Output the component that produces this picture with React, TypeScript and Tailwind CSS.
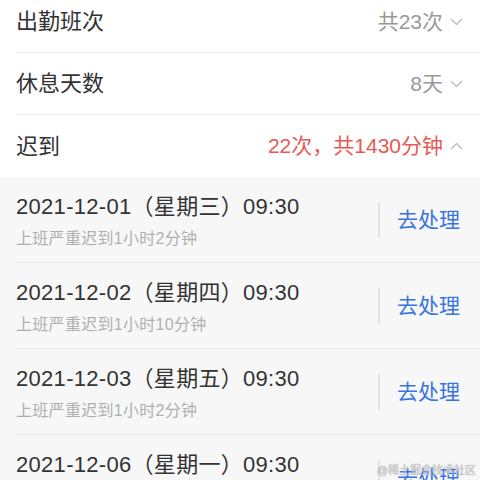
import React from 'react'

const font = { fontFamily: '"Liberation Sans", "Noto Sans CJK SC", sans-serif' }

function Chevron({ up }: { up?: boolean }) {
  return (
    <svg width="13" height="8" viewBox="0 0 13 8" className="ml-[7px]">
      <polyline
        points={up ? '1,7 6.5,1.5 12,7' : '1,1 6.5,6.5 12,1'}
        fill="none"
        stroke="#b5b5b5"
        strokeWidth="1.2"
      />
    </svg>
  )
}

export default function App() {
  const summary = [
    { label: '出勤班次', value: '共23次', red: false, up: false },
    { label: '休息天数', value: '8天', red: false, up: false },
    { label: '迟到', value: '22次，共1430分钟', red: true, up: true },
  ]

  const lates = [
    { date: '2021-12-01（星期三）09:30', desc: '上班严重迟到1小时2分钟' },
    { date: '2021-12-02（星期四）09:30', desc: '上班严重迟到1小时10分钟' },
    { date: '2021-12-03（星期五）09:30', desc: '上班严重迟到1小时2分钟' },
    { date: '2021-12-06（星期一）09:30', desc: '上班严重迟到1小时2分钟' },
  ]

  return (
    <div className="relative w-[480px] h-[480px] overflow-hidden bg-white" style={font}>
      {/* summary rows */}
      <div className="-mt-[9px]">
        {summary.map((row, i) => (
          <div key={row.label} className="pl-4">
            <div
              className={`flex items-center h-[62px] pr-[17px] ${
                i < summary.length - 1 ? 'border-b border-[#ececec]' : ''
              }`}
            >
              <span className="text-[22px] text-[#333]">{row.label}</span>
              <span className={`ml-auto text-[21px] ${row.red ? 'text-[#e65a55]' : 'text-[#999]'}`}>
                {row.value}
              </span>
              <Chevron up={row.up} />
            </div>
          </div>
        ))}
      </div>

      {/* late list */}
      <div className="bg-[#f7f7f7]">
        {lates.map((item) => (
          <div key={item.date} className="pl-4">
            <div className="flex items-center border-b border-[#e9e9e9]">
              <div className="flex flex-col pt-[15px] pb-[12px]">
                <span className="text-[22px] leading-[30px] tracking-[0.3px] text-[#333]">{item.date}</span>
                <span className="mt-[6px] text-[16px] leading-[22px] tracking-[0.3px] text-[#b0b0b0]">{item.desc}</span>
              </div>
              <div className="ml-auto flex items-center">
                <div className="w-0.5 h-9 bg-[#e3e3e3]" />
                <span className="pl-[17px] pr-5 text-[21px] text-[#3874e0]">去处理</span>
              </div>
            </div>
          </div>
        ))}
      </div>

      {/* watermark */}
      <div className="absolute right-1 bottom-[4px] text-[11px] leading-none text-[#d0d0d0] [text-shadow:0_0_1px_#999]">
        @稀土掘金技术社区
      </div>
    </div>
  )
}
